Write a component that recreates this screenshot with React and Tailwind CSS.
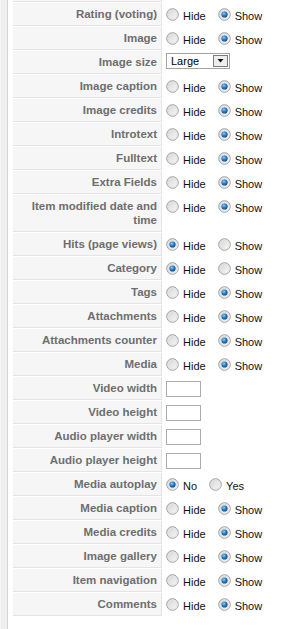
import React from "react";

function Radio({ checked }) {
  return (
    <svg width="13" height="13" viewBox="0 0 13 13" className="shrink-0 block">
      <defs>
        <linearGradient id="rg" x1="0" y1="0" x2="1" y2="1">
          <stop offset="0" stopColor="#d2d2d2" />
          <stop offset="1" stopColor="#fbfbfb" />
        </linearGradient>
        <radialGradient id="dot" cx="0.4" cy="0.35" r="0.7">
          <stop offset="0" stopColor="#8fd0ff" />
          <stop offset="0.45" stopColor="#2a86d4" />
          <stop offset="1" stopColor="#0b3f78" />
        </radialGradient>
      </defs>
      <circle cx="6.5" cy="6.5" r="5.8" fill="url(#rg)" stroke="#969696" strokeWidth="0.9" />
      <circle cx="6.5" cy="6.5" r="4.6" fill="none" stroke="#e2e2e2" strokeWidth="0.8" />
      {checked && <circle cx="6.5" cy="6.5" r="3.1" fill="url(#dot)" />}
    </svg>
  );
}

function RadioPair({ a, b, first }) {
  return (
    <div className="flex items-start pt-[5px]">
      <Radio checked={first} />
      <span className="ml-[4px] mt-[1px] leading-[14px]">{a}</span>
      <span className="ml-[12px] flex items-start">
        <Radio checked={!first} />
        <span className="ml-[4px] mt-[1px] leading-[14px]">{b}</span>
      </span>
    </div>
  );
}

const rows = [
  ["Rating (voting)", "show"],
  ["Image", "show"],
  ["Image size", "select"],
  ["Image caption", "show"],
  ["Image credits", "show"],
  ["Introtext", "show"],
  ["Fulltext", "show"],
  ["Extra Fields", "show"],
  ["Item modified date and time", "show", true],
  ["Hits (page views)", "hide"],
  ["Category", "hide"],
  ["Tags", "show"],
  ["Attachments", "show"],
  ["Attachments counter", "show"],
  ["Media", "show"],
  ["Video width", "input"],
  ["Video height", "input"],
  ["Audio player width", "input"],
  ["Audio player height", "input"],
  ["Media autoplay", "no"],
  ["Media caption", "show"],
  ["Media credits", "show"],
  ["Image gallery", "show"],
  ["Item navigation", "show"],
  ["Comments", "show"],
];

function Value({ type }) {
  if (type === "show") return <RadioPair a="Hide" b="Show" first={false} />;
  if (type === "hide") return <RadioPair a="Hide" b="Show" first={true} />;
  if (type === "no") return <RadioPair a="No" b="Yes" first={true} />;
  if (type === "input")
    return (
      <div className="pt-[4px]">
        <div className="w-[35px] h-[16px] border border-[#acacac] bg-white" />
      </div>
    );
  if (type === "select")
    return (
      <div className="pt-[2px]">
        <div className="w-[64px] h-[16px] border border-[#a3a3a3] bg-white flex items-center justify-between pl-[4px] pr-[1px]">
          <span className="text-[11px] leading-[12px] text-black">Large</span>
          <div className="w-[15px] h-[12px] border border-[#7a7a7a] bg-[#eeeeee] flex items-center justify-center">
            <svg width="7" height="4" viewBox="0 0 7 4">
              <path d="M0.5 0H6.5L3.5 3.5Z" fill="#111" />
            </svg>
          </div>
        </div>
      </div>
    );
  return null;
}

export default function App() {
  return (
    <div className="flex h-[629px] overflow-hidden bg-white font-['Liberation_Sans',Arial,sans-serif] text-[11px] text-[#111]">
      <div className="w-[1px] bg-[#f7f7f7]" />
      <div className="w-[6px] bg-[#efefef]" />
      <div className="w-[1px] bg-[#d5d5d5]" />
      <div className="w-[5px]" />
      <div className="flex-1 flex flex-col">
        <div className="flex pb-[1px]">
          <div className="w-[149px] h-[2px] bg-[#f6f6f6] border-b border-r border-[#e4e4e4]" />
        </div>
        {rows.map(([label, type, tall]) => (
          <div key={label} className="flex pb-[1px]">
            <div
              className={
                "w-[149px] shrink-0 box-border bg-[#f6f6f6] border-b border-r border-[#e4e4e4] text-right pr-[4px] pl-[4px] pt-[4px] leading-[14px] font-bold text-[11.5px] text-[#6e6e6e] " +
                (tall ? "h-[37px]" : "h-[23px]")
              }
            >
              {label}
            </div>
            <div className="pl-[4px]">
              <Value type={type} />
            </div>
          </div>
        ))}
      </div>
    </div>
  );
}
